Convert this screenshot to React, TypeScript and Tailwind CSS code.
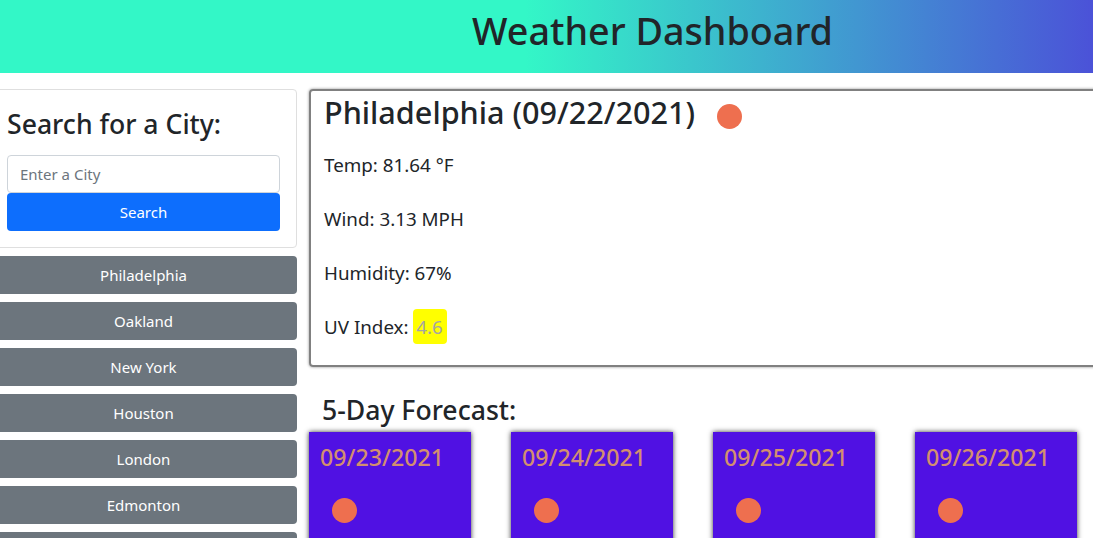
import React from 'react';

const cities = ['Philadelphia', 'Oakland', 'New York', 'Houston', 'London', 'Edmonton', ''];
const forecast = ['09/23/2021', '09/24/2021', '09/25/2021', '09/26/2021'];

function Sun({ className }: { className: string }) {
  return <span className={`block h-[25px] w-[25px] shrink-0 rounded-full bg-[#ee6f4f] ${className}`} />;
}

export default function App() {
  return (
    <div className="h-[538px] w-[1093px] overflow-hidden bg-white text-[#212529] font-['Noto_Sans',sans-serif]">
      <header className="flex h-[73px] items-center justify-center bg-[linear-gradient(90deg,#33f7c7_0%,#33f7c7_48%,#4b52d8_100%)] pb-[12px] pl-[212px]">
        <h1 className="text-[37.7px] font-medium leading-none">Weather Dashboard</h1>
      </header>

      <div className="ml-[-10px] flex w-[1400px] items-start gap-3 pt-4">
        <aside className="flex w-[307px] shrink-0 flex-col gap-2">
          <div className="rounded border border-[#dfdfdf] px-4 pt-[15px] pb-4">
            <h3 className="mb-[12px] text-[26.6px] font-medium leading-[38px]">Search for a City:</h3>
            <input
              className="block h-[38px] w-full rounded border border-[#ced4da] px-3 text-[15px] placeholder:text-[#6c757d]"
              placeholder="Enter a City"
            />
            <button className="block h-[38px] w-full rounded bg-[#0d6efd] text-[15px] text-white">Search</button>
          </div>
          {cities.map((city, i) => (
            <button key={i} className="h-[38px] w-full rounded bg-[#6c757d] text-[15px] text-white">
              {city}
            </button>
          ))}
        </aside>

        <main className="w-[1000px] shrink-0">
          <section className="h-[278px] rounded border-2 border-[#808080] pl-[13px] shadow-[0_0_3px_rgba(0,0,0,0.45)]">
            <div className="flex h-[45px] items-center">
              <h2 className="mb-[2px] text-[30.6px] font-medium leading-none">Philadelphia (09/22/2021)</h2>
              <Sun className="ml-[22px] mt-[6px]" />
            </div>
            <div className="text-[18.8px]">
              <p className="mt-[14px] h-[38px] leading-[30px]">Temp: 81.64 °F</p>
              <p className="mt-[16px] h-[38px] leading-[30px]">Wind: 3.13 MPH</p>
              <p className="mt-[16px] h-[38px] leading-[30px]">Humidity: 67%</p>
              <p className="mt-[16px] flex h-[38px] items-start leading-[30px]">
                UV Index:
                <span className="ml-[4px] mt-[-3px] flex h-[35px] w-[34px] items-center justify-center rounded bg-[#ffff00] text-[#a5a5a5]">
                  4.6
                </span>
              </p>
            </div>
          </section>

          <h3 className="mt-[25px] pl-[13px] text-[26.6px] font-medium leading-[36px]">5-Day Forecast:</h3>
          <div className="mt-[4px] flex gap-10">
            {forecast.map((day) => (
              <div key={day} className="h-[200px] w-[162px] shrink-0 bg-[#5011e3] pl-[11px] pt-[8px] shadow-[0_0_5px_rgba(0,0,0,0.8)]">
                <p className="text-[23.2px] font-medium leading-[34px] text-[#d38f6f]">{day}</p>
                <Sun className="ml-[12px] mt-[24px]" />
              </div>
            ))}
          </div>
        </main>
      </div>
    </div>
  );
}
